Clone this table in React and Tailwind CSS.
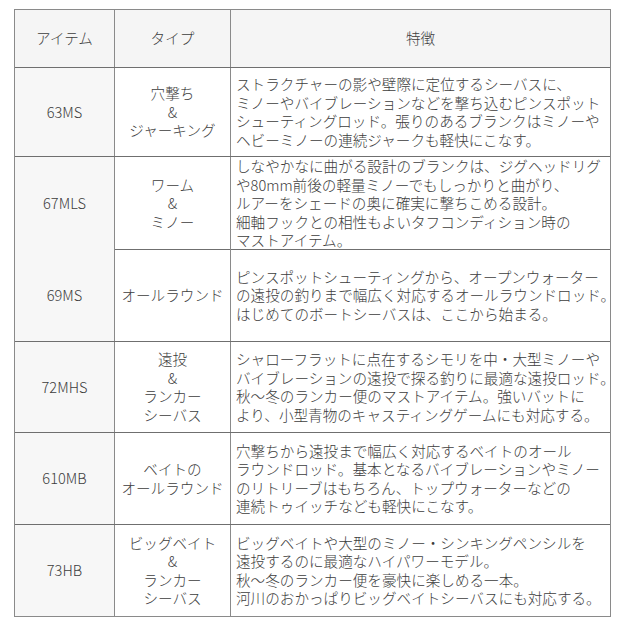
import React from "react";

const rows = [
  { item: "63MS", type: ["穴撃ち", "&", "ジャーキング"], desc: ["ストラクチャーの影や壁際に定位するシーバスに、", "ミノーやバイブレーションなどを撃ち込むピンスポット", "シューティングロッド。張りのあるブランクはミノーや", "ヘビーミノーの連続ジャークも軽快にこなす。"], h: "h-[89px]" },
  { item: "67MLS", type: ["ワーム", "&", "ミノー"], desc: ["しなやかなに曲がる設計のブランクは、ジグヘッドリグ", "や80mm前後の軽量ミノーでもしっかりと曲がり、", "ルアーをシェードの奥に確実に撃ちこめる設計。", "細軸フックとの相性もよいタフコンディション時の", "マストアイテム。"], h: "h-[93px]" },
  { item: "69MS", type: ["オールラウンド"], desc: ["ピンスポットシューティングから、オープンウォーター", "の遠投の釣りまで幅広く対応するオールラウンドロッド。", "はじめてのボートシーバスは、ここから始まる。"], h: "h-[92px]" },
  { item: "72MHS", type: ["遠投", "&", "ランカー", "シーバス"], desc: ["シャローフラットに点在するシモリを中・大型ミノーや", "バイブレーションの遠投で探る釣りに最適な遠投ロッド。", "秋〜冬のランカー便のマストアイテム。強いバットに", "より、小型青物のキャスティングゲームにも対応する。"], h: "h-[91px]" },
  { item: "610MB", type: ["ベイトの", "オールラウンド"], desc: ["穴撃ちから遠投まで幅広く対応するベイトのオール", "ラウンドロッド。基本となるバイブレーションやミノー", "のリトリーブはもちろん、トップウォーターなどの", "連続トゥイッチなども軽快にこなす。"], h: "h-[92px]" },
  { item: "73HB", type: ["ビッグベイト", "&", "ランカー", "シーバス"], desc: ["ビッグベイトや大型のミノー・シンキングペンシルを", "遠投するのに最適なハイパワーモデル。", "秋〜冬のランカー便を豪快に楽しめる一本。", "河川のおかっぱりビッグベイトシーバスにも対応する。"], h: "h-[91px]" },
];

export default function App() {
  return (
    <div
      className="w-[625px] h-[625px] bg-white pt-[9px] pl-[14px] text-[#3d3d3d]"
      style={{ fontFamily: '"Noto Sans CJK JP", "Noto Sans", sans-serif' }}
    >
      <div className="w-[597px] border border-[#8a8a8a] font-light text-[14.6px] leading-[18.5px]">
        <div className="grid grid-cols-[100px_116px_1fr] h-[58px] bg-[#f5f5f5] border-b border-[#6f6f6f]">
          <div className="flex items-center justify-center border-r border-[#8a8a8a]">アイテム</div>
          <div className="flex items-center justify-center border-r border-[#8a8a8a]">タイプ</div>
          <div className="flex items-center justify-center">特徴</div>
        </div>
        {rows.map((r, i) => (
          <div
            key={r.item}
            className={`grid grid-cols-[100px_116px_1fr] ${r.h} ${i < rows.length - 1 ? "border-b border-[#6f6f6f]" : ""}`}
          >
            <div className="flex items-center justify-center bg-[#f7f7f7] border-r border-[#8a8a8a]">{r.item}</div>
            <div className="flex flex-col items-center justify-center border-r border-[#8a8a8a] whitespace-nowrap">
              {r.type.map((t, j) => (
                <div key={j}>{t}</div>
              ))}
            </div>
            <div className="flex flex-col justify-center pl-[5px] whitespace-nowrap overflow-visible">
              {r.desc.map((t, j) => (
                <div key={j}>{t}</div>
              ))}
            </div>
          </div>
        ))}
      </div>
    </div>
  );
}
